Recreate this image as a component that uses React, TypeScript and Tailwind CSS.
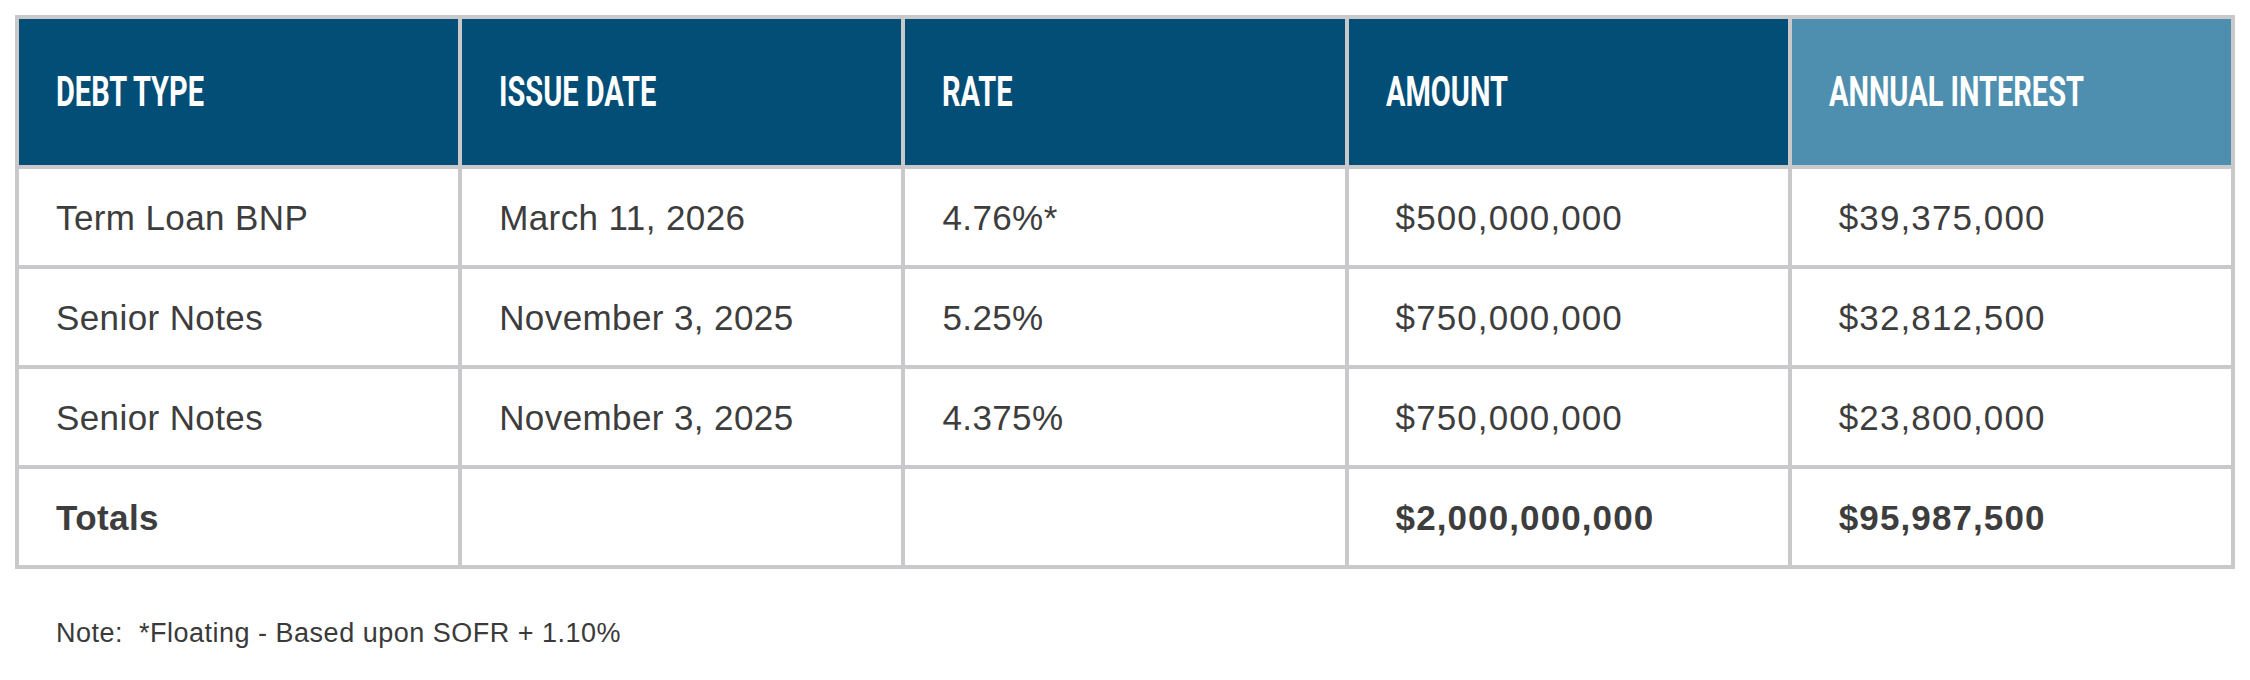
import React from 'react';

const headers = ['DEBT TYPE', 'ISSUE DATE', 'RATE', 'AMOUNT', 'ANNUAL INTEREST'];

const rows = [
    ['Term Loan BNP', 'March 11, 2026', '4.76%*', '$500,000,000', '$39,375,000'],
    ['Senior Notes', 'November 3, 2025', '5.25%', '$750,000,000', '$32,812,500'],
    ['Senior Notes', 'November 3, 2025', '4.375%', '$750,000,000', '$23,800,000'],
];

const totals = ['Totals', '', '', '$2,000,000,000', '$95,987,500'];

export default function App() {
    return (
        <div className="w-[2250px] h-[680px] bg-white pt-[15px] pl-[15px] font-['Liberation_Sans',Arial,sans-serif]">
            <div className="grid grid-cols-5 gap-[4px] p-[4px] w-[2220px] bg-[#c9c9cb]">
                {/* Header */}
                {headers.map((h, i) => (
                    <div
                        key={h}
                        className={`h-[146px] flex items-center pl-[37px] ${i === 4 ? 'bg-[#4e8faf]' : 'bg-[#024e76]'}`}
                    >
                        <span className="block origin-left scale-x-[0.69] whitespace-nowrap text-white font-['Roboto',sans-serif] font-bold text-[42px] leading-none">
                            {h}
                        </span>
                    </div>
                ))}

                {/* Rows */}
                {rows.map((row, r) =>
                    row.map((cell, c) => (
                        <div
                            key={`${r}-${c}`}
                            className={`h-[96px] bg-white flex items-center ${c >= 3 ? 'pl-[47px]' : 'pl-[37px]'}`}
                        >
                            <span
                                className={`text-[35px] leading-none text-[#3d3d3d] whitespace-nowrap ${c >= 3 ? 'tracking-[1.1px]' : 'tracking-[0.4px]'}`}
                            >
                                {cell}
                            </span>
                        </div>
                    ))
                )}

                {/* Totals */}
                {totals.map((cell, c) => (
                    <div
                        key={`t-${c}`}
                        className={`h-[96px] bg-white flex items-center ${c >= 3 ? 'pl-[47px]' : 'pl-[37px]'}`}
                    >
                        <span
                            className={`text-[35px] leading-none font-bold text-[#3d3d3d] whitespace-nowrap ${c >= 3 ? 'tracking-[1.1px]' : 'tracking-[0.4px]'}`}
                        >
                            {cell}
                        </span>
                    </div>
                ))}
            </div>

            <p className="mt-[51px] pl-[41px] text-[27px] leading-none tracking-[0.5px] text-[#3a3a3a] whitespace-pre">
                {'Note:  *Floating - Based upon SOFR + 1.10%'}
            </p>
        </div>
    );
}
